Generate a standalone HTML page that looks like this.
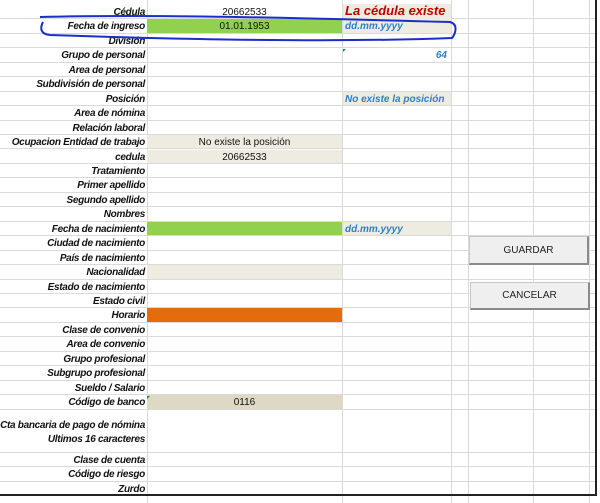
<!DOCTYPE html>
<html><head><meta charset="utf-8"><style>
body{margin:0;width:600px;height:503px;background:#fff;position:relative;overflow:hidden;font-family:"Liberation Sans",sans-serif}
.g{position:absolute;background:#dadada}
.r{position:absolute;left:0;width:597px;height:14.45px;border-bottom:1px solid #dadada;box-sizing:border-box}
.r div{position:absolute;top:0;height:100%;line-height:15px;font-size:10px;white-space:nowrap}
.l{left:0;width:145px;text-align:right;font-weight:bold;font-style:italic;color:#111;letter-spacing:-0.3px;font-size:10px!important}
.b{left:147px;width:195px;text-align:center;color:#111}
.c{left:343px;width:108px;padding-left:2px;box-sizing:border-box}
.bl{color:#2e7fc9;font-weight:bold;font-style:italic}
.btn{position:absolute;background:#efefef;border:1px solid #c8c8c8;border-right:2px solid #8a8a8a;border-bottom:2px solid #8a8a8a;font-size:10px;text-align:center;color:#222;box-sizing:border-box}
</style></head><body>
<div class="g" style="left:147px;top:0;width:1px;height:503px"></div>
<div class="g" style="left:342px;top:0;width:1px;height:503px"></div>
<div class="g" style="left:451px;top:0;width:1px;height:503px"></div>
<div class="g" style="left:468px;top:0;width:1px;height:503px"></div>
<div class="g" style="left:533px;top:0;width:1px;height:503px"></div>
<div class="g" style="left:589px;top:0;width:1px;height:503px"></div>

<div class="r" style="top:5px"><div class="l">Cédula</div><div class="b">20662533</div><div class="c" style="background:#eeece1;color:#c00000;font-weight:bold;font-style:italic;font-size:13px;line-height:13px;top:-1px;height:15px">La cédula existe</div></div>
<div class="r" style="top:19.45px"><div class="l">Fecha de ingreso</div><div class="b" style="background:#92d050">01.01.1953</div><div class="c bl" style="background:#eeece1">dd.mm.yyyy</div></div>
<div class="r" style="top:33.9px"><div class="l">División</div></div>
<div class="r" style="top:48.35px"><div class="l">Grupo de personal</div><div class="c bl" style="text-align:right;padding-right:4px">64</div></div>
<div class="r" style="top:62.8px"><div class="l">Area de personal</div></div>
<div class="r" style="top:77.25px"><div class="l">Subdivisión de personal</div></div>
<div class="r" style="top:91.7px"><div class="l">Posición</div><div class="c bl" style="background:#eeece1">No existe la posición</div></div>
<div class="r" style="top:106.15px"><div class="l">Area de nómina</div></div>
<div class="r" style="top:120.6px"><div class="l">Relación laboral</div></div>
<div class="r" style="top:135.05px"><div class="l">Ocupacion Entidad de trabajo</div><div class="b" style="background:#eeece1">No existe la posición</div></div>
<div class="r" style="top:149.5px"><div class="l">cedula</div><div class="b" style="background:#eeece1">20662533</div></div>
<div class="r" style="top:163.95px"><div class="l">Tratamiento</div></div>
<div class="r" style="top:178.4px"><div class="l">Primer apellido</div></div>
<div class="r" style="top:192.85px"><div class="l">Segundo apellido</div></div>
<div class="r" style="top:207.3px"><div class="l">Nombres</div></div>
<div class="r" style="top:221.75px"><div class="l">Fecha de nacimiento</div><div class="b" style="background:#92d050"></div><div class="c bl" style="background:#eeece1">dd.mm.yyyy</div></div>
<div class="r" style="top:236.2px"><div class="l">Ciudad de nacimiento</div></div>
<div class="r" style="top:250.65px"><div class="l">País de nacimiento</div></div>
<div class="r" style="top:265.1px"><div class="l">Nacionalidad</div><div class="b" style="background:#eeece1"></div></div>
<div class="r" style="top:279.55px"><div class="l">Estado de nacimiento</div></div>
<div class="r" style="top:294px"><div class="l">Estado civil</div></div>
<div class="r" style="top:308.45px"><div class="l">Horario</div><div class="b" style="background:#e46c0a"></div></div>
<div class="r" style="top:322.9px"><div class="l">Clase de convenio</div></div>
<div class="r" style="top:337.35px"><div class="l">Area de convenio</div></div>
<div class="r" style="top:351.8px"><div class="l">Grupo profesional</div></div>
<div class="r" style="top:366.25px"><div class="l">Subgrupo profesional</div></div>
<div class="r" style="top:380.7px"><div class="l">Sueldo / Salario</div></div>
<div class="r" style="top:395.15px"><div class="l">Código de banco</div><div class="b" style="background:#ddd9c4">0116</div></div>
<div class="r" style="top:409.6px;height:43.3px"><div class="l" style="top:8px;height:14px">Cta bancaria de pago de nómina</div><div class="l" style="top:22px;height:14px">Ultimos 16 caracteres</div></div>
<div class="r" style="top:452.9px"><div class="l">Clase de cuenta</div></div>
<div class="r" style="top:467.35px"><div class="l">Código de riesgo</div></div>
<div class="r" style="top:481.8px"><div class="l">Zurdo</div></div>

<div style="position:absolute;left:0;top:0;width:597px;height:496px;border-right:2px solid #222;border-bottom:2px solid #222;box-sizing:border-box"></div>

<div class="btn" style="left:469px;top:236px;width:120px;height:29px;line-height:27px">GUARDAR</div>
<div class="btn" style="left:470px;top:282px;width:120px;height:28px;line-height:26px">CANCELAR</div>

<svg style="position:absolute;left:0;top:0" width="600" height="503">
<path d="M40 17 C150 14 300 18 450 22 C458 24 456 33 452 38 C350 42 200 40 50 35 C40 34 40 28 43 22" fill="none" stroke="#1a2ec9" stroke-width="2"/>
<path d="M147 396 l3 0 l-3 3z M343 49 l3 0 l-3 3z" fill="#2a8a2a"/>
</svg>
</body></html>
